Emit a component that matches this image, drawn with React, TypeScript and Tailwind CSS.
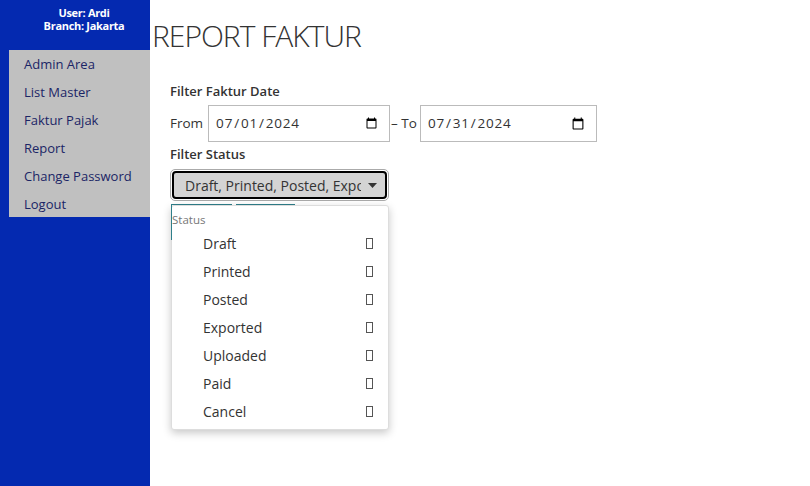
import React from "react";

const font = { fontFamily: '"Open Sans", "Liberation Sans", sans-serif' };

function Tofu() {
  return <span className="inline-block w-[7px] h-[11px] border border-[#555]" />;
}

export default function App() {
  const menu = ["Admin Area", "List Master", "Faktur Pajak", "Report", "Change Password", "Logout"];
  const statuses = ["Draft", "Printed", "Posted", "Exported", "Uploaded", "Paid", "Cancel"];
  return (
    <div className="flex w-[810px] h-[486px] bg-white overflow-hidden" style={font}>
      <aside className="w-[150px] h-full bg-[#0429b0] shrink-0 flex flex-col">
        <div className="h-[50px] flex flex-col items-center pt-[6px] pl-[18px] text-white text-[11px] font-bold leading-[13px] tracking-[-0.3px]">
          <div>User: Ardi</div>
          <div>Branch: Jakarta</div>
        </div>
        <div className="ml-[9px] h-[167px] pt-[1px] bg-[#c0c0c0] flex flex-col">
          {menu.map((m) => (
            <div key={m} className="h-[28px] shrink-0 flex items-center pl-[15px] text-[13px] text-[#1b2566]">
              {m}
            </div>
          ))}
        </div>
      </aside>
      <main className="flex-1 flex flex-col">
        <div className="h-[70px] flex items-center ml-[2px] text-[30px] font-light text-[#333] tracking-[-1px]">
          REPORT FAKTUR
        </div>
        <div className="pl-[20px] flex flex-col">
          <div className="mt-[11px] h-[20px] leading-[20px] text-[13px] font-semibold text-[#333]">Filter Faktur Date</div>
          <div className="mt-[4px] flex items-center h-[37px] text-[13.5px] text-[#333]">
            <span className="mr-[5px]">From</span>
            <input
              type="date"
              defaultValue="2024-07-01"
              className="w-[182px] h-[37px] border border-[#bbb] pl-[6px] pr-[9px] text-[13.5px] text-[#333] tracking-[0.8px]"
              style={font}
            />
            <span className="ml-[1px] mr-[3px]">– To</span>
            <input
              type="date"
              defaultValue="2024-07-31"
              className="w-[177px] h-[37px] border border-[#bbb] pl-[6px] pr-[9px] text-[13.5px] text-[#333] tracking-[0.8px]"
              style={font}
            />
          </div>
          <div className="mt-[2px] h-[20px] leading-[20px] text-[13px] font-semibold text-[#333]">Filter Status</div>
          <div className="mt-[5px] w-[219px] h-[32px] rounded-[5px] border border-[#aaa] p-[1px]">
            <div className="w-full h-full rounded-[4px] border-2 border-black bg-[#d4d4d4] flex items-center pl-[11px] pr-[8px]">
              <span className="w-[176px] overflow-hidden whitespace-nowrap text-[14px] text-[#333]">
                Draft, Printed, Posted, Exported, Uploaded, Paid, Cancel
              </span>
              <svg width="9" height="5" viewBox="0 0 9 5" className="ml-[7px]">
                <path d="M0 0 L9 0 L4.5 5 Z" fill="#333" />
              </svg>
            </div>
          </div>
          <div className="relative mt-[3px] flex gap-[4px]">
            <div className="ml-[1px] w-[61px] h-[36px] border-t border-[#2f7f8a]" />
            <div className="w-[59px] h-[36px] border-t border-[#2f7f8a]" />
            <div className="absolute left-[1px] top-[1px] w-[218px] h-[225px] bg-white rounded-[3px] border border-[#ddd] shadow-[0_3px_8px_rgba(0,0,0,0.22)] flex flex-col">
              <div className="pt-[7px] h-[23px] text-[11.5px] leading-[14px] text-[#777]">Status</div>
              {statuses.map((s) => (
                <div key={s} className="h-[28px] flex items-center justify-between pl-[31px] pr-[15px] text-[14px] text-[#333]">
                  <span>{s}</span>
                  <Tofu />
                </div>
              ))}
            </div>
            <div className="absolute left-[1px] top-0 w-px h-[36px] bg-[#2f7f8a]" />
          </div>
        </div>
      </main>
    </div>
  );
}
